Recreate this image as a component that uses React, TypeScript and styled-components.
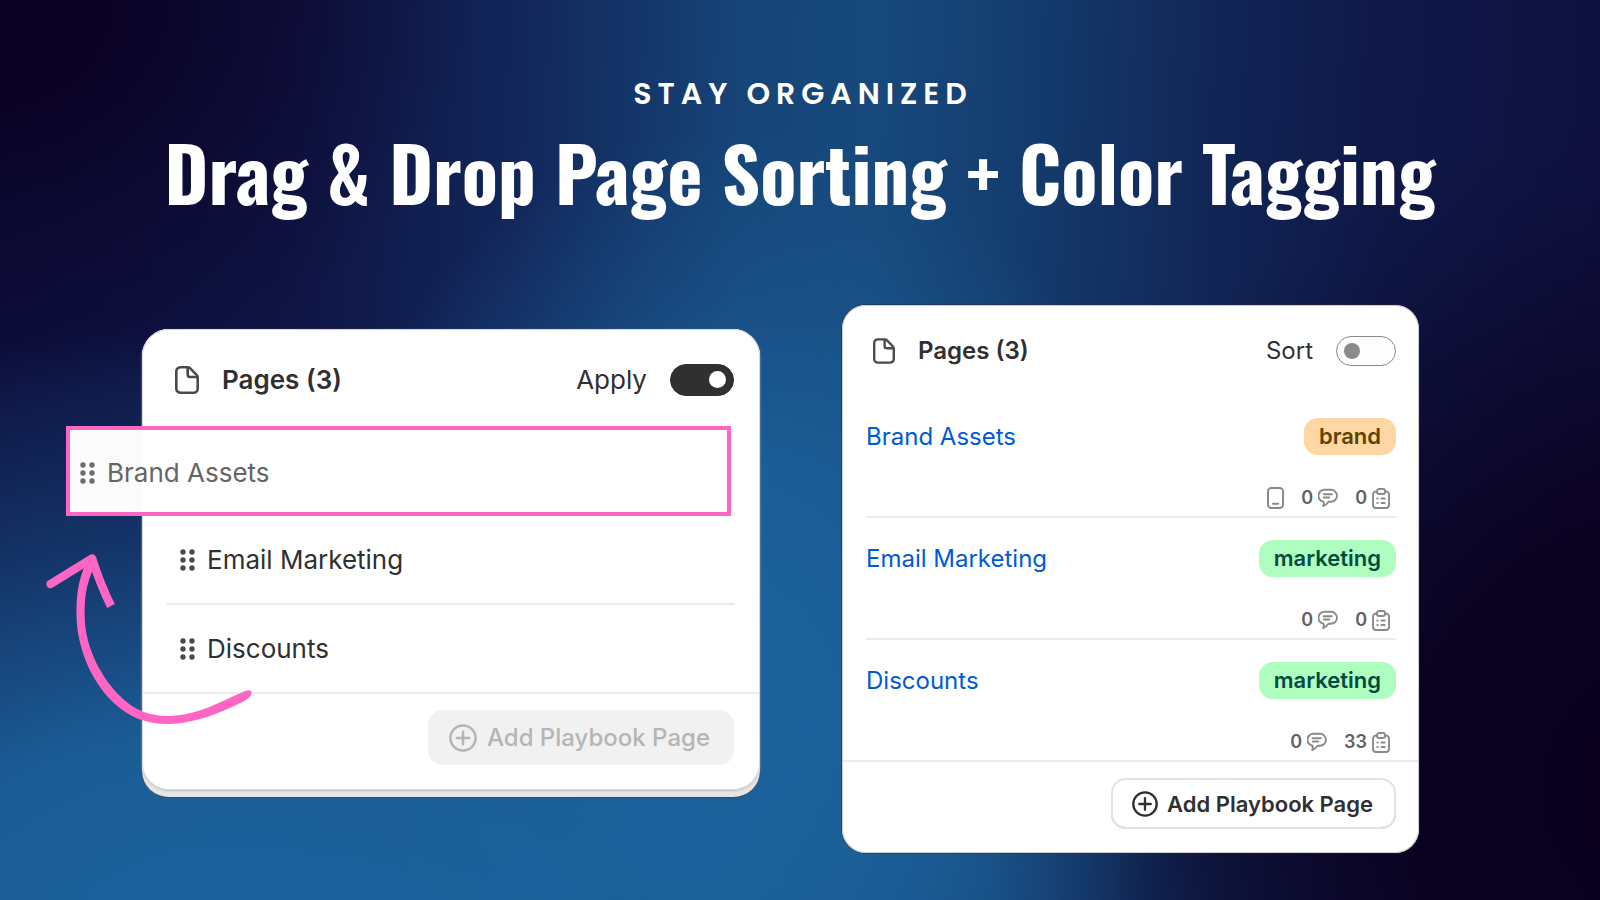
import React from "react";
import styled, { createGlobalStyle, css } from "styled-components";

const GlobalStyle = createGlobalStyle`
  *, *::before, *::after { box-sizing: border-box; }
  body {
    margin: 0;
    background: #0b0930;
    color: #303030;
    font-family: Inter, "Liberation Sans", sans-serif;
  }
  h1, h2, p, ul { margin: 0; padding: 0; }
  ul { list-style: none; }
`;

const Page = styled.main`
  min-height: 100vh;
  overflow: hidden;
  padding-bottom: 47px;
  background:
    radial-gradient(ellipse 30% 44% at 0% 0%, #0a0022 0%, #0a0022cc 30%, #0a002255 65%, #0a002200 100%),
    radial-gradient(ellipse 42% 74% at 104% 88%, #0a001e 0%, #0a001ef0 36%, #0a001e77 66%, #0a001e22 86%, #0a001e00 100%),
    radial-gradient(ellipse 28% 62% at 46% 76%, #1c629c 0%, #1c629ccc 40%, #1c629c55 70%, #1c629c00 100%),
    radial-gradient(ellipse 62% 70% at 14% 106%, #1c649f 0%, #1c649fe6 35%, #1c649f66 68%, #1c649f00 100%),
    linear-gradient(92deg, #0d0e3c 0%, #0f1444 18%, #12265a 32%, #164578 46%, #17497c 54%, #143c6e 63%, #112555 75%, #0f1848 85%, #0f103f 100%);
`;

const Heading = styled.header`
  display: flex;
  flex-direction: column;
  align-items: center;
  padding: 74px 24px 0;
  color: #fff;
  text-align: center;
`;

const Eyebrow = styled.p`
  padding-left: 6px;
  font: 600 30px/40px Poppins, Montserrat, Lato, sans-serif;
  letter-spacing: 6px;
`;

const Title = styled.h1`
  margin-top: 10px;
  font: 700 75px/96px Oswald, "Liberation Sans Narrow", sans-serif;
`;

const Boards = styled.div`
  display: grid;
  grid-template-columns: minmax(0, 618fr) minmax(0, 577fr);
  align-items: start;
  gap: 82px;
  padding: 85px 181px 0 142px;
`;

const LeftCard = styled.section`
  position: relative;
  margin-top: 24px;
  padding-bottom: 7px;
  border-bottom: 1px solid #444;
  border-radius: 27px;
  background: #e6e6e6;
`;

const CardBody = styled.div`
  border-radius: 27px;
  background: #fff;
  box-shadow: inset 0 0 0 1px #d8d8d8, 0 1px 2px #bbb;
`;

const RightCard = styled.section`
  border-radius: 24px;
  background: #fff;
  box-shadow: inset 0 0 0 1px #ccc, 0 0 0 1px #2a2a3a66;
`;

const CardHeader = styled.div<{ $large?: boolean }>`
  display: flex;
  align-items: center;
  justify-content: space-between;
  height: ${(p) => (p.$large ? 98 : 91)}px;
  padding: ${(p) => (p.$large ? "3px 26px 0 33px" : "0 23px 0 31px")};
  font-size: ${(p) => (p.$large ? 26 : 24)}px;
  line-height: 32px;
`;

const CardTitle = styled.h2`
  display: flex;
  align-items: center;
  gap: 23px;
  font-size: inherit;
  font-weight: 600;
`;

const ToggleLabel = styled.label`
  display: flex;
  align-items: center;
  gap: 23px;
`;

const Toggle = styled.input<{ $large?: boolean }>`
  appearance: none;
  display: flex;
  align-items: center;
  width: ${(p) => (p.$large ? 64 : 60)}px;
  height: ${(p) => (p.$large ? 32 : 30)}px;
  margin: 0;
  padding: 0 7px;
  border: 1px solid #8a8a8a;
  border-radius: 16px;
  background: #fdfdfd;

  &::before {
    content: "";
    width: 16px;
    height: 16px;
    border-radius: 50%;
    background: #8a8a8a;
  }

  &:checked {
    justify-content: flex-end;
    border-color: #303030;
    background: #303030;
  }

  &:checked::before {
    width: 17px;
    height: 17px;
    background: #fff;
  }
`;

const SortList = styled.ul`
  padding: 0 25px;
`;

const rowText = css`
  display: flex;
  align-items: center;
  gap: 12px;
  font-size: 26px;
  line-height: 32px;
`;

const SortRow = styled.li`
  ${rowText}
  position: relative;
  height: 89px;
  padding-left: 13px;
  border-bottom: 2px solid #ebebeb;
  color: #303030;

  &:last-child {
    margin: 0 -24px;
    padding-left: 37px;
  }
`;

const DraggedRow = styled.div`
  ${rowText}
  position: absolute;
  inset: -1px 4px -2px -101px;
  padding: 4px 0 0 10px;
  border: 4px solid #ff66c4;
  background: linear-gradient(90deg, #fbfbfb 71px, #fff 71px);
  color: #656565;

  svg { opacity: 0.8; }
`;

const CardFooter = styled.div<{ $large?: boolean }>`
  display: flex;
  justify-content: flex-end;
  padding: ${(p) => (p.$large ? "16px 26px 25px" : "16px 23px 24px")};
`;

const AddButton = styled.button<{ $large?: boolean }>`
  display: flex;
  align-items: center;
  gap: ${(p) => (p.$large ? 10 : 9)}px;
  height: ${(p) => (p.$large ? 55 : 51)}px;
  padding: ${(p) => (p.$large ? "0 24px 0 21px" : "0 23px 0 21px")};
  border: 0;
  border-radius: 15px;
  background: #fff;
  box-shadow: inset 0 0 0 2px #e3e3e3, inset 0 -2px 0 #b5b5b5;
  color: #303030;
  font: ${(p) => (p.$large ? "550 24px" : "600 22px")}/32px Inter, "Liberation Sans", sans-serif;

  &:disabled {
    background: #f1f1f1;
    box-shadow: none;
    color: #b5b5b5;
  }
`;

const PageList = styled.ul`
  padding: 0 23px 0 24px;
`;

const PageRow = styled.li`
  display: flex;
  flex-direction: column;
  justify-content: space-between;
  height: 122px;
  padding: 22px 0 6px;
  border-bottom: 2px solid #ebebeb;

  &:last-child {
    margin: 0 -22px 0 -23px;
    padding-right: 22px;
    padding-left: 23px;
  }
`;

const PageTop = styled.div`
  display: flex;
  align-items: center;
  justify-content: space-between;
`;

const PageLink = styled.a`
  color: #005bd3;
  font-size: 24px;
  line-height: 32px;
  text-decoration: none;
`;

const Tag = styled.span<{ $tone: "orange" | "green" }>`
  padding: 0 15px;
  border-radius: 14px;
  background: ${(p) => (p.$tone === "orange" ? "#ffd6a4" : "#affebf")};
  color: ${(p) => (p.$tone === "orange" ? "#5e4200" : "#014b40")};
  font-size: 22px;
  font-weight: 600;
  line-height: 37px;
`;

const Meta = styled.div`
  display: flex;
  align-items: center;
  justify-content: flex-end;
  gap: 17px;
  height: 24px;
  padding-right: 6px;
  color: #616161;
  font-size: 18px;
  font-weight: 600;
  line-height: 24px;
`;

const Count = styled.span`
  display: flex;
  align-items: center;
  gap: 5px;
`;

const Arrow = styled.svg`
  position: absolute;
  top: 211px;
  left: -102px;
  pointer-events: none;
`;

const FileIcon = ({ size }: { size: number }) => (
  <svg width={size} height={Math.round((size * 28) / 24)} viewBox="0 0 24 28" fill="none" stroke="#4a4a4a" strokeWidth="2.6" strokeLinejoin="round" aria-hidden="true">
    <path d="M5.3 1.3h7.4c.9 0 1.7.3 2.3.9l6.6 6.6c.7.7 1.1 1.5 1.1 2.5v11.4a4 4 0 0 1-4 4H5.3a4 4 0 0 1-4-4V5.3a4 4 0 0 1 4-4Z" />
    <path d="M12.7 1.5v7.2a2.3 2.3 0 0 0 2.3 2.3h7.4" />
  </svg>
);

const GripIcon = () => (
  <svg width="15" height="22" viewBox="0 0 15 22" fill="#4a4a4a" aria-hidden="true">
    {[3, 11, 19].map((y) => (
      <g key={y}>
        <circle cx="3" cy={y} r="2.7" />
        <circle cx="12" cy={y} r="2.7" />
      </g>
    ))}
  </svg>
);

const PlusIcon = ({ size }: { size: number }) => (
  <svg width={size} height={size} viewBox="0 0 28 28" fill="none" stroke="currentColor" strokeWidth="2.5" strokeLinecap="round" aria-hidden="true">
    <circle cx="14" cy="14" r="12.6" />
    <path d="M14 7.8v12.4M7.8 14h12.4" />
  </svg>
);

const PhoneIcon = () => (
  <svg width="17" height="22" viewBox="0 0 17 22" fill="none" stroke="#8a8a8a" strokeWidth="2" strokeLinecap="round" aria-hidden="true">
    <rect x="1" y="1" width="15" height="20" rx="3.5" />
    <path d="M6 16.7h5" />
  </svg>
);

const ChatIcon = () => (
  <svg width="20" height="20" viewBox="0 0 20 20" fill="none" stroke="#8a8a8a" strokeWidth="1.9" strokeLinecap="round" strokeLinejoin="round" aria-hidden="true">
    <path d="M7 1.8h6a6 6 0 0 1 0 12h-2.5c-1.3 2-3 3.6-5.3 4.3.6-1.3.8-3 .3-4.4A6 6 0 0 1 7 1.8Z" />
    <path d="M5.8 6.3h8M5.8 9.5h5.5" />
  </svg>
);

const ClipboardIcon = () => (
  <svg width="18" height="21" viewBox="0 0 18 21" fill="none" stroke="#8a8a8a" strokeWidth="1.9" strokeLinecap="round" aria-hidden="true">
    <path d="M5 3.5H4a3 3 0 0 0-3 3V17a3 3 0 0 0 3 3h10a3 3 0 0 0 3-3V6.5a3 3 0 0 0-3-3h-1" />
    <rect x="5" y="1" width="8" height="5" rx="2" />
    <path d="M5.3 10.5h.4M9.5 10.5h3.2M5.3 15h.4M9.5 15h3.2" />
  </svg>
);

const pages: { name: string; tag: string; tone: "orange" | "green"; mobile?: boolean; comments: number; tasks: number }[] = [
  { name: "Brand Assets", tag: "brand", tone: "orange", mobile: true, comments: 0, tasks: 0 },
  { name: "Email Marketing", tag: "marketing", tone: "green", comments: 0, tasks: 0 },
  { name: "Discounts", tag: "marketing", tone: "green", comments: 0, tasks: 33 },
];

export default function App() {
  return (
    <>
      <GlobalStyle />
      <Page>
        <Heading>
          <Eyebrow>STAY ORGANIZED</Eyebrow>
          <Title>Drag &amp; Drop Page Sorting + Color Tagging</Title>
        </Heading>
        <Boards>
          <LeftCard>
            <CardBody>
              <CardHeader $large>
                <CardTitle>
                  <FileIcon size={24} />
                  Pages (3)
                </CardTitle>
                <ToggleLabel>
                  Apply
                  <Toggle type="checkbox" role="switch" $large defaultChecked />
                </ToggleLabel>
              </CardHeader>
              <SortList>
                <SortRow>
                  <DraggedRow>
                    <GripIcon />
                    Brand Assets
                  </DraggedRow>
                </SortRow>
                <SortRow>
                  <GripIcon />
                  Email Marketing
                </SortRow>
                <SortRow>
                  <GripIcon />
                  Discounts
                </SortRow>
              </SortList>
              <CardFooter $large>
                <AddButton type="button" $large disabled>
                  <PlusIcon size={28} />
                  Add Playbook Page
                </AddButton>
              </CardFooter>
            </CardBody>
            <Arrow width="220" height="190" viewBox="40 540 220 190" fill="none" stroke="#ff66c4" strokeLinecap="round" aria-hidden="true">
              <path d="M50.5 584 92 558.5" strokeWidth="8.5" />
              <path d="M92 558.5C97 574 103 590 111 606" strokeWidth="8.5" strokeLinecap="butt" />
              <path
                d="M86 563C77 582 75.5 602 77 625C80 655 94 685 115 704C129 717 146 724 168 724C192 724 222 713 246 700C251 697 252.5 693 251 691C249 689.5 246 691 243 692C222 701 196 716 168 716C150 716 134 710 121 697C102 679 87 650 85 623C83.5 602 85.5 584 95 565Z"
                fill="#ff66c4"
                stroke="none"
              />
            </Arrow>
          </LeftCard>
          <RightCard>
            <CardHeader>
              <CardTitle>
                <FileIcon size={22} />
                Pages (3)
              </CardTitle>
              <ToggleLabel>
                Sort
                <Toggle type="checkbox" role="switch" />
              </ToggleLabel>
            </CardHeader>
            <PageList>
              {pages.map((page) => (
                <PageRow key={page.name}>
                  <PageTop>
                    <PageLink href="#">{page.name}</PageLink>
                    <Tag $tone={page.tone}>{page.tag}</Tag>
                  </PageTop>
                  <Meta>
                    {page.mobile && <PhoneIcon />}
                    <Count>
                      {page.comments}
                      <ChatIcon />
                    </Count>
                    <Count>
                      {page.tasks}
                      <ClipboardIcon />
                    </Count>
                  </Meta>
                </PageRow>
              ))}
            </PageList>
            <CardFooter>
              <AddButton type="button">
                <PlusIcon size={26} />
                Add Playbook Page
              </AddButton>
            </CardFooter>
          </RightCard>
        </Boards>
      </Page>
    </>
  );
}
